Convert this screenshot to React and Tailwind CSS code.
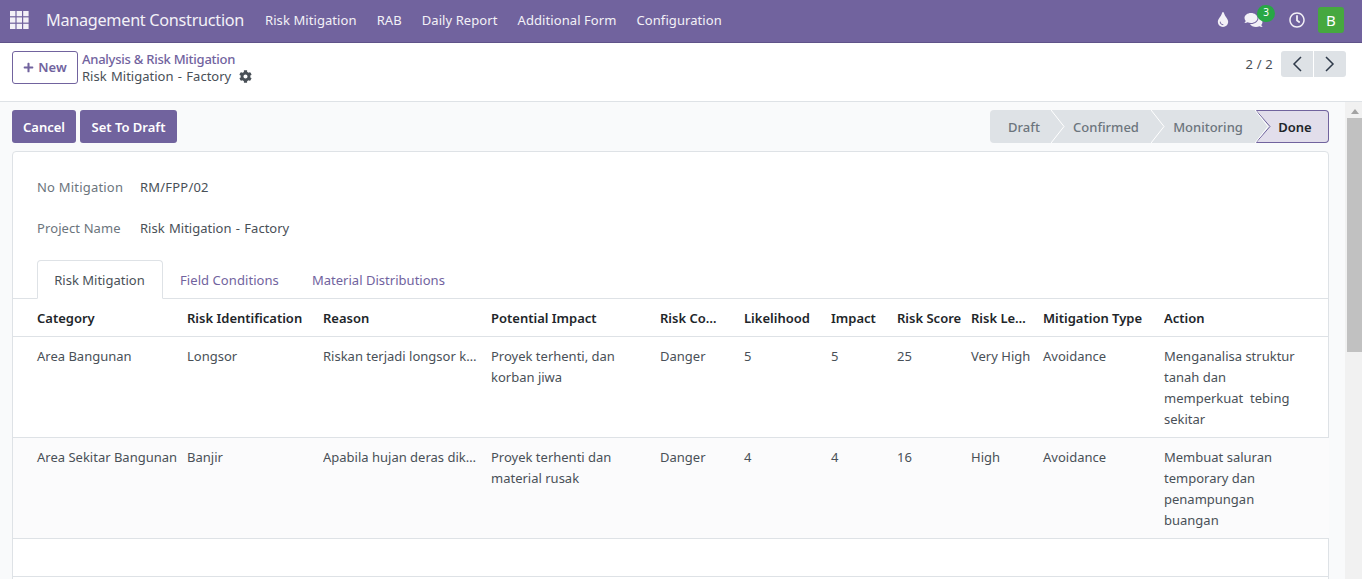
import React from "react";
import { FaTint, FaComments, FaPlus, FaCog, FaRegClock } from "react-icons/fa";

const menus = ["Risk Mitigation", "RAB", "Daily Report", "Additional Form", "Configuration"];
const cols = [
  ["Category", "w-[174px] pl-[24px] pr-[9px]"],
  ["Risk Identification", "w-[136px] pr-[9px]"],
  ["Reason", "w-[168px] pr-[9px]"],
  ["Potential Impact", "w-[169px] pr-[9px]"],
  ["Risk Confidence", "w-[84px] pr-[20px]"],
  ["Likelihood", "w-[87px] pr-[9px]"],
  ["Impact", "w-[66px] pr-[9px]"],
  ["Risk Score", "w-[74px] pr-[6px]"],
  ["Risk Level", "w-[72px] pr-[15px]"],
  ["Mitigation Type", "w-[121px] pr-[9px]"],
  ["Action", "w-[165px] pr-[24px]"],
];
const rows = [
  ["Area Bangunan", "Longsor", "Riskan terjadi longsor karena tanah", "Proyek terhenti, dan korban jiwa", "Danger", "5", "5", "25", "Very High", "Avoidance", "Menganalisa struktur tanah dan memperkuat\u00a0 tebing sekitar"],
  ["Area Sekitar Bangunan", "Banjir", "Apabila hujan deras dikarenakan", "Proyek terhenti dan material rusak", "Danger", "4", "4", "16", "High", "Avoidance", "Membuat saluran temporary dan penampungan buangan"],
];

function Chevron({ dir }) {
  return (
    <svg width="12" height="16" viewBox="0 0 12 16" fill="none" stroke="#2f3a4a" strokeWidth="1.5">
      <path d={dir === "l" ? "M10 1 L3 8 L10 15" : "M2 1 L9 8 L2 15"} />
    </svg>
  );
}

function Stage({ label, className }) {
  return (
    <div className={`relative flex items-center justify-center pt-[1px] text-[#6c757d] font-medium ${className}`}>
      {label}
      <svg className="absolute top-0 left-full z-10 -ml-px" width="14" height="33" viewBox="0 0 14 33">
        <path d="M0 0 L13 16.5 L0 33 Z" fill="#dee2e6" />
        <path d="M0 0 L13 16.5 L0 33" fill="none" stroke="#ffffff" strokeWidth="1" />
      </svg>
    </div>
  );
}

export default function App() {
  return (
    <div className="h-[579px] w-[1362px] overflow-hidden flex flex-col bg-[#f9fafb] text-[13px] leading-[21px] text-[#495057] font-['Noto_Sans',sans-serif]">
      <header className="h-[43px] shrink-0 bg-[#71639e] border-b border-[#5f5389] flex items-center text-white">
        <div className="pl-[10px] w-[46px] mb-[2px]">
          <svg width="19" height="18" viewBox="0 0 19 18" fill="#f3f1f7">
            <rect x="0" y="0" width="5.4" height="5.2" /><rect x="6.6" y="0" width="5.4" height="5.2" /><rect x="13.2" y="0" width="5.4" height="5.2" />
            <rect x="0" y="6.4" width="5.4" height="5.2" /><rect x="6.6" y="6.4" width="5.4" height="5.2" /><rect x="13.2" y="6.4" width="5.4" height="5.2" />
            <rect x="0" y="12.8" width="5.4" height="5.2" /><rect x="6.6" y="12.8" width="5.4" height="5.2" /><rect x="13.2" y="12.8" width="5.4" height="5.2" />
          </svg>
        </div>
        <div className="text-[16.25px] tracking-[-0.3px] text-[#f3f1f7] w-[219px] mb-[2px]">Management Construction</div>
        <nav className="flex gap-[20px] text-[13px] tracking-[0.08px] text-[#f3f1f7] mb-[2px]">
          {menus.map((m) => <span key={m}>{m}</span>)}
        </nav>
        <div className="ml-auto flex items-center pr-[18px] mb-[2px]">
          <FaTint className="w-[12px] h-[15px] text-[#f3f1f7] mr-[15px] mb-[1px]" />
          <div className="relative mr-[26px] mb-[1px]">
            <FaComments className="w-[19px] h-[16px] text-[#f3f1f7]" />
            <span className="absolute -top-[7px] left-[13px] w-[18px] h-[17px] rounded-full bg-[#28a745] text-white text-[10px] leading-[15px] text-center">3</span>
          </div>
          <FaRegClock className="w-[16px] h-[16px] text-[#f3f1f7] mr-[13px] mb-[1px]" />
          <div className="w-[26px] h-[26px] rounded-[3px] bg-[#46a83f] text-white text-[15px] flex items-center justify-center">B</div>
        </div>
      </header>

      <div className="h-[59px] shrink-0 bg-white border-b border-[#dee2e6] flex items-start pl-[12px] pr-[16px] pt-[8px]">
        <button className="w-[66px] h-[33px] rounded-[3px] border border-[#71639e] text-[#71639e] font-semibold flex items-center justify-center gap-[4px]">
          <FaPlus className="w-[11px] h-[11px]" />New
        </button>
        <div className="ml-[4px] leading-[17px]">
          <div className="text-[#71639e] font-medium tracking-[-0.25px]">Analysis &amp; Risk Mitigation</div>
          <div className="flex items-center gap-[8px] text-[#495057]">
            <span className="[word-spacing:1px]">Risk Mitigation - Factory</span>
            <FaCog className="w-[13px] h-[13px] text-[#495057]" />
          </div>
        </div>
        <div className="ml-auto flex items-center h-[26px]">
          <span className="mr-[8px] tracking-[0.2px]">2 / 2</span>
          <div className="flex gap-px">
            <div className="w-[32px] h-[26px] bg-[#dee2e6] rounded-l-[3px] flex items-center justify-center"><Chevron dir="l" /></div>
            <div className="w-[32px] h-[26px] bg-[#dee2e6] rounded-r-[3px] flex items-center justify-center"><Chevron dir="r" /></div>
          </div>
        </div>
      </div>

      <div className="flex-1 flex min-h-0">
        <main className="flex-1 min-w-0 pl-[12px] pr-[16px] pt-[8px] overflow-hidden">
          <div className="flex justify-between h-[33px] mb-[8px]">
            <div className="flex gap-[4px]">
              <button className="h-[33px] w-[64px] pt-[1px] rounded-[3px] bg-[#71639e] text-white font-semibold">Cancel</button>
              <button className="h-[33px] w-[97px] pt-[1px] rounded-[3px] bg-[#71639e] text-white font-semibold">Set To Draft</button>
            </div>
            <div className="flex h-[33px]">
              <Stage label="Draft" className="w-[62px] pl-[6px] bg-[#dee2e6] rounded-l-[4px]" />
              <Stage label="Confirmed" className="w-[100px] pl-[8px] bg-[#dee2e6]" />
              <Stage label="Monitoring" className="w-[104px] pl-[8px] bg-[#dee2e6]" />
              <div className="relative w-[73px] pl-[6px] pt-[1px] flex items-center justify-center bg-[#e2deeb] border-y border-r border-[#71639e] rounded-r-[4px] text-[#212529] font-semibold">
                Done
                <svg className="absolute -top-px left-0" width="16" height="33" viewBox="0 0 16 33">
                  <path d="M0 0 L14 16.5 L0 33 Z" fill="#dee2e6" />
                  <path d="M0 0.5 L14 16.5 L0 32.5" fill="none" stroke="#71639e" strokeWidth="1" />
                </svg>
              </div>
            </div>
          </div>

          <section className="bg-white border border-[#dee2e6] rounded-t-[4px] min-h-[500px]">
            <div className="pl-[24px] pt-[25px] h-[108px]">
              <div className="flex h-[21px]">
                <span className="w-[103px] text-[#6c757d] tracking-[0.2px]">No Mitigation</span>
                <span className="tracking-[0.2px]">RM/FPP/02</span>
              </div>
              <div className="flex h-[21px] mt-[20px]">
                <span className="w-[103px] text-[#6c757d] tracking-[0.1px]">Project Name</span>
                <span className="[word-spacing:1px]">Risk Mitigation - Factory</span>
              </div>
            </div>
            <div className="flex h-[39px] pl-[24px] border-b border-[#dee2e6]">
              <div className="w-[126px] h-[39px] pt-[1px] pr-[1px] bg-white border border-[#dee2e6] border-b-white rounded-t-[4px] flex items-center justify-center">Risk Mitigation</div>
              <div className="pl-[17px] pr-[17px] pt-[2px] flex items-center text-[#71639e] tracking-[0.07px]">Field Conditions</div>
              <div className="px-[16px] pt-[2px] flex items-center text-[#71639e] tracking-[0.02px]">Material Distributions</div>
            </div>
            <table className="table-fixed w-full border-collapse">
              <thead>
                <tr className="h-[37px] border-b border-[#dee2e6]">
                  {cols.map(([c, w]) => (
                    <th key={c} className={`${w} pt-[2px] text-left font-semibold text-[#212529] truncate`}>{c}</th>
                  ))}
                </tr>
              </thead>
              <tbody>
                {rows.map((r, i) => (
                  <tr key={i} className={`border-b border-[#dee2e6] ${i === 1 ? "bg-[#fbfbfc]" : ""}`}>
                    {r.map((v, j) => (
                      <td key={j} className={`pt-[9px] pb-[7px] align-top ${j === 10 ? "pr-[24px]" : "pr-[9px]"} ${j === 0 ? "pl-[24px]" : ""} ${j === 2 ? "truncate" : ""}`}>{v}</td>
                    ))}
                  </tr>
                ))}
                <tr className="h-[38px] border-b border-[#dee2e6]"><td colSpan={11}></td></tr>
              </tbody>
            </table>
          </section>
        </main>
        <aside className="w-[17px] shrink-0 bg-[#f1f1f1] flex flex-col items-end">
          <svg className="mt-[7px] mb-[4px] mr-[3px]" width="8" height="5" viewBox="0 0 8 5" fill="#a3a3a3"><path d="M4 0 L8 5 L0 5 Z" /></svg>
          <div className="w-[15px] h-[234px] bg-[#c1c1c1]"></div>
        </aside>
      </div>
    </div>
  );
}
